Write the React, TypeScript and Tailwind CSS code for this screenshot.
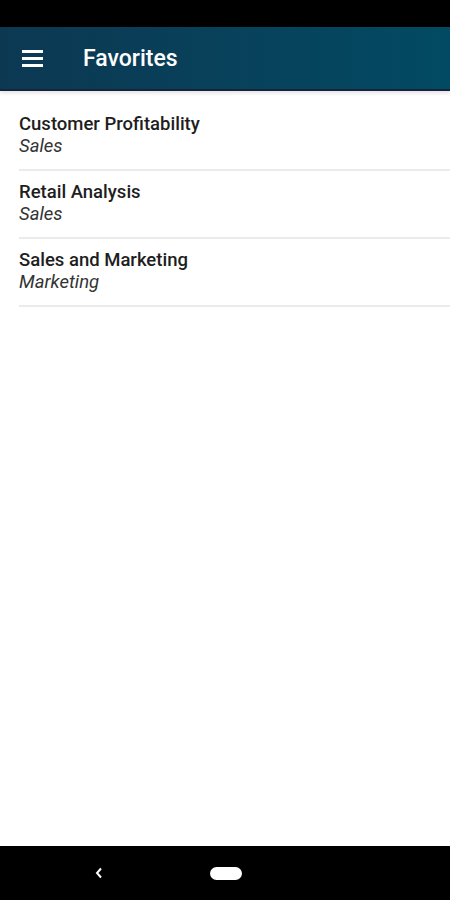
const favorites = [
  { title: 'Customer Profitability', group: 'Sales' },
  { title: 'Retail Analysis', group: 'Sales' },
  { title: 'Sales and Marketing', group: 'Marketing' },
]

export default function App() {
  return (
    <div className="flex h-[900px] w-[450px] flex-col overflow-hidden bg-white font-['Roboto',sans-serif]">
      <div className="h-[27px] shrink-0 bg-black" />
      <header className="relative z-10 flex h-[64px] shrink-0 items-center border-b-2 border-[#15233f] bg-gradient-to-r from-[#0c3852] to-[#024a63] shadow-[0_2px_4px_rgba(0,0,0,0.12)]">
        <div className="ml-[22px] flex w-[21px] flex-col gap-[4px]">
          <span className="h-[3px] w-full bg-white" />
          <span className="h-[3px] w-full bg-white" />
          <span className="h-[3px] w-full bg-white" />
        </div>
        <h1 className="ml-[40px] mt-[2px] text-[23px] font-medium text-white">Favorites</h1>
      </header>
      <main className="flex-1 pl-[19px] pt-[12px]">
        {favorites.map((f) => (
          <div key={f.title} className="flex h-[68px] flex-col justify-center border-b-2 border-[#ebebeb] pb-[2px]">
            <div className="text-[18.5px] leading-[22px] font-medium text-[#1e1e1e]">{f.title}</div>
            <div className="text-[18.5px] leading-[22px] italic text-[#333]">{f.group}</div>
          </div>
        ))}
      </main>
      <nav className="flex h-[54px] shrink-0 items-center bg-black">
        <svg className="ml-[94px]" width="10" height="12" viewBox="0 0 10 12">
          <path d="M7 1.5 L3 6 L7 10.5" fill="none" stroke="white" strokeWidth="2" />
        </svg>
        <span className="ml-[106px] h-[13px] w-[32px] rounded-full bg-white" />
      </nav>
    </div>
  )
}
